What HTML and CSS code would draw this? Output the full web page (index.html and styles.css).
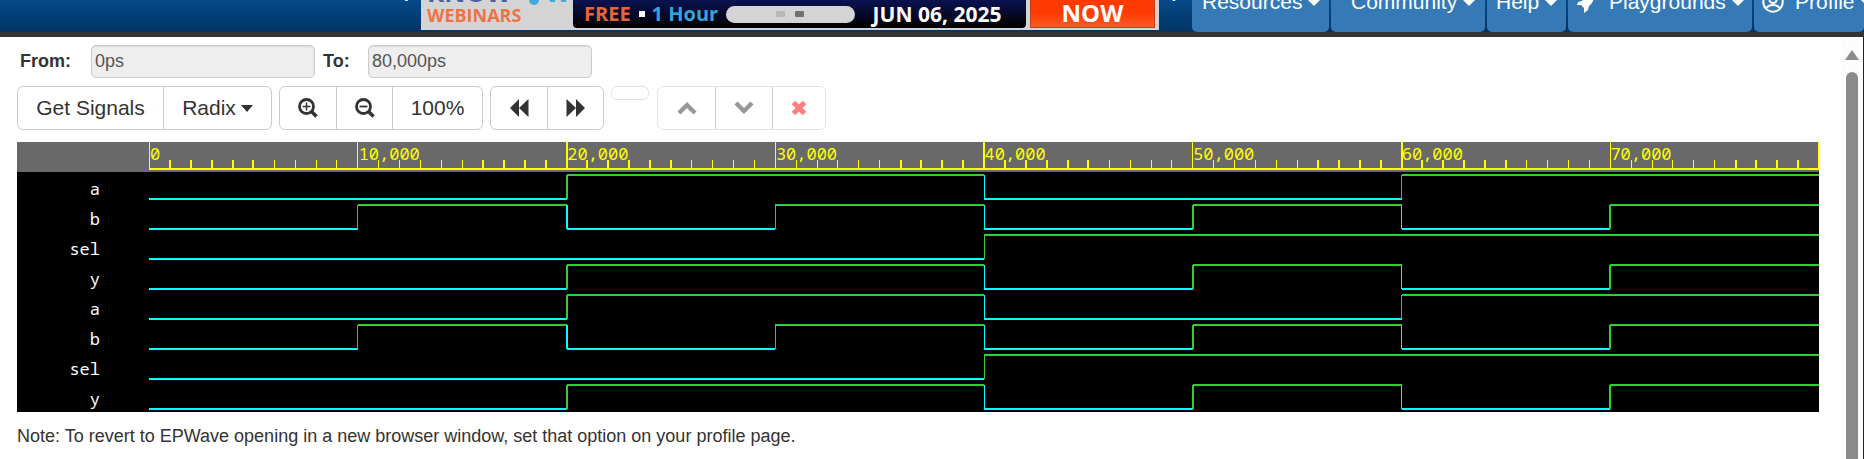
FILE: index.html
```html
<!DOCTYPE html>
<html lang="en">
<head>
<meta charset="utf-8">
<title>EPWave</title>
<link rel="stylesheet" href="styles.css">
</head>
<body>
<header class="topbar">
  <div class="carousel">
    <button class="arrow" aria-label="Previous">‹</button>
    <a class="banner" href="#">
      <span class="brand">
        <span class="brand-top"><span class="know">KNOW</span><span class="pin"></span><span class="how">W</span></span>
        <span class="brand-sub">WEBINARS</span>
      </span>
      <span class="details">
        <span class="free">FREE</span><span class="square"></span><span class="hour">1 Hour</span>
        <span class="pager"><i></i><i class="on"></i></span>
        <span class="date">JUN 06, 2025</span>
      </span>
      <span class="cta">NOW</span>
    </a>
    <button class="arrow" aria-label="Next">›</button>
  </div>
  <nav class="nav">
    <button class="tab resources">Resources<span class="caret"></span></button>
    <button class="tab community">Community<span class="caret"></span></button>
    <button class="tab help">Help<span class="caret"></span></button>
    <button class="tab play"><svg class="rocket" viewBox="0 0 18 22"><path d="M17 2C12 2 8 5 5 10L1 11 0 14 4 14 7 17 7 22 11 19 12 15C16 12 18 7 17 2Z" fill="#fff"/></svg>Playgrounds<span class="caret"></span></button>
    <button class="tab profile"><svg class="user" viewBox="0 0 22 22"><circle cx="11" cy="11" r="9.7" fill="none" stroke="#fff" stroke-width="2"/><circle cx="11" cy="8.5" r="3.6" fill="none" stroke="#fff" stroke-width="2"/><path d="M4.5 17C7 13 15 13 17.500 17" fill="none" stroke="#fff" stroke-width="2"/></svg>Profile<span class="caret"></span></button>
  </nav>
</header>
<div class="frame">
<main class="viewer">
  <form class="range">
    <label for="from">From:</label><input id="from" value="0ps" readonly>
    <label class="to" for="to">To:</label><input id="to" value="80,000ps" readonly>
  </form>
  <div class="toolbar">
    <div class="group"><button class="btn signals">Get Signals</button><button class="btn radix">Radix<span class="caret dark"></span></button></div>
    <div class="group">
      <button class="btn icon" aria-label="Zoom in"><svg width="20" height="20" viewBox="0 0 20 20"><g fill="none" stroke="#333"><circle cx="8.500" cy="8.500" r="7" stroke-width="2.800"/><path d="M13.500 13.500L18.500 18.500" stroke-width="3.600"/><path d="M4.500 8.500H12.500M8.500 4.500V12.500" stroke-width="1.500"/></g></svg></button>
      <button class="btn icon" aria-label="Zoom out"><svg width="20" height="20" viewBox="0 0 20 20"><g fill="none" stroke="#333"><circle cx="8.500" cy="8.500" r="7" stroke-width="2.800"/><path d="M13.500 13.500L18.500 18.500" stroke-width="3.600"/><path d="M4.500 8.500H12.500" stroke-width="1.800"/></g></svg></button>
      <button class="btn percent">100%</button>
    </div>
    <div class="group">
      <button class="btn icon" aria-label="Back"><svg width="20" height="18" viewBox="0 0 20 18"><path d="M10 0V18L1 9ZM19.500 0V18L10 9Z" fill="#333"/></svg></button>
      <button class="btn icon" aria-label="Forward"><svg width="20" height="18" viewBox="0 0 20 18"><path d="M10 0V18L19 9ZM.5 0V18L10 9Z" fill="#333"/></svg></button>
    </div>
    <div class="empty"></div>
    <div class="group inactive">
      <button class="btn icon" disabled aria-label="Up"><svg width="20" height="14" viewBox="0 0 20 14"><path d="M2 12L10 4 18 12" fill="none" stroke="#333" stroke-width="4.400"/></svg></button>
      <button class="btn icon" disabled aria-label="Down"><svg width="20" height="14" viewBox="0 0 20 14"><path d="M2 2L10 10 18 2" fill="none" stroke="#333" stroke-width="4.400"/></svg></button>
      <button class="btn remove" disabled aria-label="Remove"><svg width="16" height="16" viewBox="0 0 16 16"><path d="M2.500 2.500L13.500 13.500M13.500 2.500L2.500 13.500" fill="none" stroke="#f00" stroke-width="5"/></svg></button>
    </div>
  </div>
  <section class="waves" id="waves">
    <div class="ruler">
      <div class="scale">
        <svg class="plot" id="ticks" viewBox="0 0 80 30" preserveAspectRatio="none"></svg>
        <div class="times"><span>0</span><span>10,000</span><span>20,000</span><span>30,000</span><span>40,000</span><span>50,000</span><span>60,000</span><span>70,000</span></div>
      </div>
    </div>
  </section>
  <p class="note">Note: To revert to EPWave opening in a new browser window, set that option on your profile page.</p>
</main>
<div class="scrollbar"><span class="up"></span><span class="thumb"></span></div>
</div>
<script src="waves.js"></script>
</body>
</html>
```
FILE: styles.css
```css
* { box-sizing: border-box; }
html, body { height: 100%; }
body { margin: 0; display: flex; flex-direction: column; background: #fff; color: #333; font: 17px "Liberation Sans", Arial, sans-serif; overflow: hidden; }
button, input { font: inherit; color: inherit; margin: 0; }
button { padding: 0; border: 0; background: none; }

.topbar { flex: none; display: flex; justify-content: space-between; align-items: flex-end; height: 37px; border-bottom: 5px solid #333436; background: linear-gradient(#04498a, #033462); overflow: hidden; }
.carousel { display: flex; align-items: flex-end; margin-left: 388px; }
.arrow { width: 33px; height: 32px; color: #fff; font-size: 26px; line-height: 1px; padding-bottom: 38px; }
.banner { display: flex; align-items: flex-end; height: 40px; margin-bottom: 2px; padding: 0 4px 2px 0; background: #d4d4d4; color: #fff; font-family: "Open Sans", sans-serif; font-weight: 700; text-decoration: none; white-space: nowrap; }
.brand { width: 152px; padding-left: 6px; display: flex; flex-direction: column; }
.brand-top { display: flex; align-items: flex-end; font-size: 26px; line-height: 26px; padding-bottom: 1px; color: #3fa9dc; }
.know { color: #4a62a3; }
.pin { width: 10px; height: 12px; margin: 0 6px 0 18px; border-radius: 5px; background: #3fa9dc; }
.brand-sub { color: #ee7447; font-size: 18px; line-height: 18px; padding-bottom: 4px; }
.details { display: flex; align-items: center; width: 453px; height: 38px; padding: 10px 0 0 11px; border-radius: 0 0 4px 4px; background: linear-gradient(#0b1458 20%, #000); font-size: 20px; line-height: 20px; }
.free { color: #e8643a; }
.square { width: 6px; height: 6px; margin: 0 7px 0 8px; background: #fff; }
.hour { width: 74px; color: #36a3dc; }
.date { font-size: 21px; }
.pager { display: flex; align-items: center; justify-content: center; gap: 10px; width: 129px; height: 17px; margin: 0 18px 0 0; border-radius: 9px; background: #d4d4d4; }
.pager i { width: 9px; height: 6px; border-radius: 1px; background: #b8b8b8; }
.pager .on { background: #707070; }
.cta { width: 125px; height: 38px; margin-left: 4px; padding-top: 10px; border: 1px solid #b8431d; background: linear-gradient(#ff3a00 60%, #ff5a26); font-size: 24px; line-height: 24px; text-align: center; }

.nav { flex: none; display: flex; gap: 2px; }
.tab { display: flex; align-items: center; height: 42px; padding-bottom: 18px; border-radius: 0 0 5px 5px; background: #357ab7; color: #fff; font-size: 21px; line-height: 24px; white-space: nowrap; }
.caret { border: 7px solid transparent; border-top-color: #fff; border-bottom: 0; margin-left: 5px; }
.caret.dark { border-width: 6px; border-top-width: 7px; border-bottom: 0; border-top-color: #333; }
.resources { width: 137px; padding-left: 10px; }
.community { width: 154px; padding-left: 20px; }
.help { width: 79px; padding-left: 9px; }
.play { width: 184px; padding-left: 9px; }
.profile { width: 110px; padding-left: 8px; }
.rocket { flex: none; width: 18px; height: 22px; margin-right: 14px; }
.user { flex: none; width: 22px; height: 22px; margin-right: 11px; }

.frame { flex: 1; display: flex; min-height: 0; border-right: 1px solid #222; }
.viewer { flex: 1; min-width: 0; padding: 8px 22px 0 17px; }
.range { display: flex; align-items: center; }
.range label { width: 74px; padding-left: 3px; font-weight: 700; font-size: 18px; }
.range .to { width: 53px; padding-left: 8px; }
.range input { width: 224px; height: 33px; padding: 0 3px; border: 1px solid #ccc; border-radius: 5px; background: #eee; color: #555; font-size: 18px; box-shadow: inset 0 1px 1px rgba(0,0,0,.08); }
.toolbar { display: flex; align-items: flex-start; gap: 7px; margin-top: 8px; }
.group { display: flex; border: 1px solid #ccc; border-radius: 6px; height: 44px; }
.inactive { border-color: #e5e5e5; margin-left: 1px; }
.btn { display: flex; align-items: center; justify-content: center; font-size: 21px; border-left: 1px solid #ccc; }
.btn:first-child { border-left: 0; }
.btn:disabled svg { opacity: .5; }
.signals { width: 145px; }
.radix { width: 108px; }
.icon { width: 56px; }
.inactive .icon { width: 57px; }
.percent { width: 90px; }
.remove { width: 53px; }
.empty { width: 38px; height: 14px; border: 1px solid #e5e5e5; border-radius: 6px; }

.waves { margin-top: 12px; background: #000; font: 17px "Noto Sans Mono", "DejaVu Sans Mono", monospace; }
.ruler, .lane { display: grid; grid-template-columns: 132px 1fr; height: 30px; }
.ruler { background: #696969; }
.scale { grid-column: 2; display: grid; }
.scale > * { grid-area: 1 / 1; }
.times { display: grid; grid-template-columns: repeat(8, 1fr); padding-left: 1px; color: #ff0; line-height: 23px; }
.name { color: #fff; text-align: right; padding-right: 49px; line-height: 34px; }
.plot { display: block; width: 100%; height: 30px; }
.plot path { fill: none; stroke-width: 2px; vector-effect: non-scaling-stroke; shape-rendering: crispEdges; }
.plot .thin { stroke-width: 1px; }
.tick { stroke: #ff0; }
.high { stroke: #32cd32; }
.low { stroke: #0ff; }
.note { margin: 12px 0 0; font-size: 18px; line-height: 24px; }

.scrollbar { flex: none; display: flex; flex-direction: column; align-items: center; width: 22px; padding-top: 13px; background: #fcfcfc; }
.up { border: 7px solid transparent; border-top: 0; border-bottom: 10px solid #8b8b8b; }
.thumb { flex: 1; width: 12px; margin-top: 12px; border-radius: 6px 6px 0 0; background: #8b8b8b; }
```
FILE: waves.js
```js
// Levels per 10,000 ps step
const signals = [["a", "00110011"], ["b", "01010101"], ["sel", "00001111"], ["y", "00110101"]];
const thinSteps = [1, 3, 4, 6];
const path = (cls, d) => `<path class="${cls}" d="${d}"/>`;

let ticks = path("tick", "M0 27H80");
for (let i = 0; i <= 80; i++) {
  ticks += path("tick" + (i % 20 > 5 && i % 20 < 16 ? " thin" : ""), `M${i} ${i % 10 ? 18 : 0}V27`);
}
document.getElementById("ticks").innerHTML = ticks;

const waves = document.getElementById("waves");
for (const [name, bits] of [...signals, ...signals]) {
  let d = "";
  [...bits].forEach((bit, i) => {
    const cls = bit === "1" ? "high" : "low";
    const y = bit === "1" ? 3 : 27;
    d += path(cls, `M${i * 10} ${y}H${i * 10 + 10}`);
    if (i && bits[i - 1] !== bit) d += path(cls + (thinSteps.includes(i) ? " thin" : ""), `M${i * 10} 3V27`);
  });
  waves.insertAdjacentHTML("beforeend",
    `<div class="lane"><span class="name">${name}</span><svg class="plot" viewBox="0 0 80 30" preserveAspectRatio="none">${d}</svg></div>`);
}
```
